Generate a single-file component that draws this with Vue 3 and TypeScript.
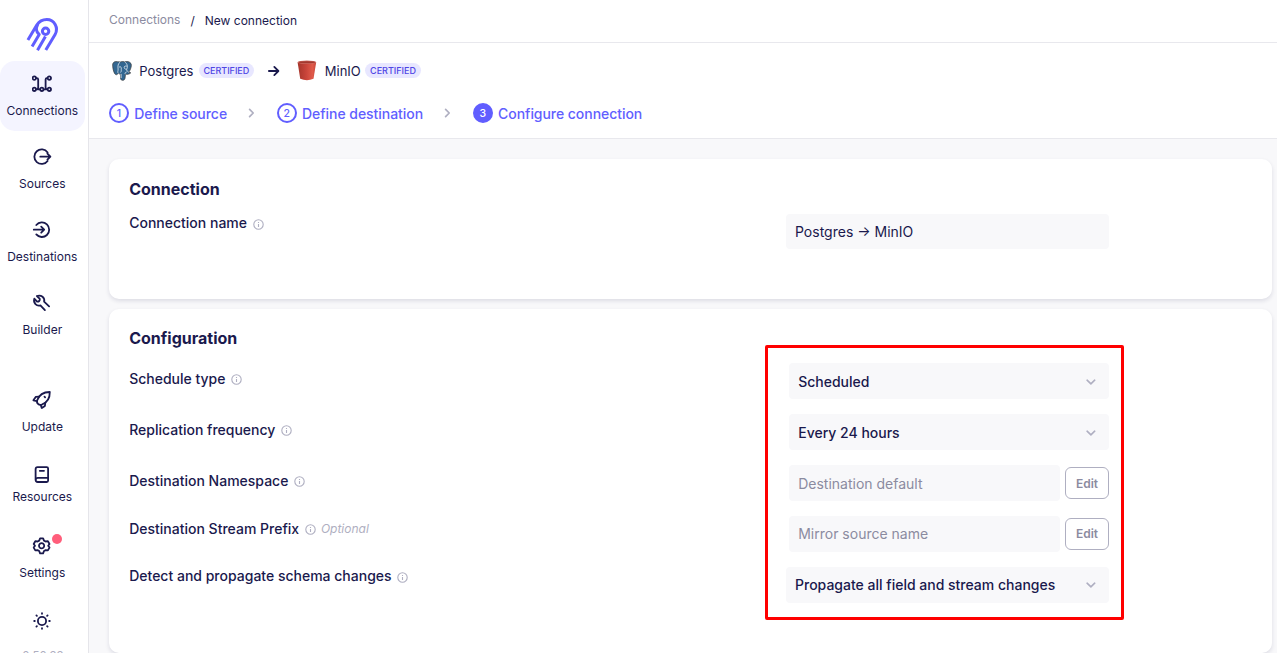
<script setup lang="ts">
interface NavItem {
  label: string
  icon: string
  cls: string
  paths: string[]
}

const navItems: NavItem[] = [
  {
    label: 'Connections',
    icon: 'connections',
    cls: 'active',
    paths: [
      'M4.1 4.1H4.8Q6.2 4.1 6.2 5.5V13.4Q6.2 15.3 4.3 15.3',
      'M15.1 4.1H15Q13.6 4.1 13.6 5.5V13.4Q13.6 15.3 15.2 15.3',
      'M6.2 15.3H7.6M11.9 15.3H13.6',
      'M0.6 4.1a1.7 1.7 0 1 0 3.4 0a1.7 1.7 0 1 0-3.4 0M15.6 4.1a1.7 1.7 0 1 0 3.4 0a1.7 1.7 0 1 0-3.4 0M0.6 15.3a1.7 1.7 0 1 0 3.4 0a1.7 1.7 0 1 0-3.4 0M8.1 15.3a1.7 1.7 0 1 0 3.4 0a1.7 1.7 0 1 0-3.4 0M15.6 15.3a1.7 1.7 0 1 0 3.4 0a1.7 1.7 0 1 0-3.4 0',
    ],
  },
  {
    label: 'Sources',
    icon: 'sources',
    cls: '',
    paths: ['M15.6 5.4A7.3 7.3 0 1 0 15.6 13.9', 'M8.3 9.7H18.2M15.4 6.7L18.4 9.7L15.4 12.7'],
  },
  {
    label: 'Destinations',
    icon: 'destinations',
    cls: '',
    paths: ['M4.3 5A7.3 7.3 0 1 1 4.3 14.4', 'M1.8 9.7H12M9.2 6.7L12.2 9.7L9.2 12.7'],
  },
  {
    label: 'Builder',
    icon: 'builder',
    cls: '',
    paths: [
      'M12.9 17.1L8.4 12.3C4.6 13.4 1 10 2.3 5.7L5.1 8.6C6.8 8.9 8.1 7.6 7.8 5.9L4.9 3C9.2 1.4 13.2 4.8 12.1 8.7L17.1 13.3',
    ],
  },
  {
    label: 'Update',
    icon: 'update',
    cls: 'update',
    paths: [
      'M5.2 10.2C7 5 11.5 2.1 17.8 2C17.9 8 15 12.7 9.8 14.7C6.7 15.7 4.3 13.1 5.2 10.2Z',
      'M7.2 6.6L3.7 6.9L1.4 10.3L4.9 11.1M13.3 12.7L12.9 15.9L9.8 18.1L8.8 15.1',
      'M12.5 6.7L13.1 7.3',
    ],
  },
  {
    label: 'Resources',
    icon: 'resources',
    cls: 'resources',
    paths: [
      'M5.5 2.2H14.7Q16.1 2.2 16.1 3.6V15.5Q16.1 17 14.7 17H5.8Q3.6 17 3.6 14.8V4.2Q3.6 2.2 5.5 2.2Z',
      'M3.8 14.2Q4 12.8 5.8 12.8H16M7.8 5.8H12',
    ],
  },
  {
    label: 'Settings',
    icon: 'settings',
    cls: 'settings',
    paths: [
      'M8.1 2.3H11.1L12 4.6L13.7 5.5L15.9 5.2L17.5 8L16.2 9.7L17.5 11.6L15.9 14.4L13.7 14.1L12 15L11.1 17.3H8.1L7.2 15L5.5 14.1L3.3 14.4L1.7 11.6L3 9.7L1.7 8L3.3 5.2L5.5 5.5L7.2 4.6Z',
      'M7 9.8a2.6 2.6 0 1 0 5.2 0a2.6 2.6 0 1 0-5.2 0',
    ],
  },
]

interface ConfigRow {
  label: string
  cls: string
  value: string
  kind: 'select' | 'edit'
  optional?: boolean
}

const rows: ConfigRow[] = [
  { label: 'Schedule type', cls: '', value: 'Scheduled', kind: 'select' },
  { label: 'Replication frequency', cls: '', value: 'Every 24 hours', kind: 'select' },
  { label: 'Destination Namespace', cls: '', value: 'Destination default', kind: 'edit' },
  { label: 'Destination Stream Prefix', cls: 'prefix', value: 'Mirror source name', kind: 'edit', optional: true },
  { label: 'Detect and propagate schema changes', cls: 'wide', value: 'Propagate all field and stream changes', kind: 'select' },
]
</script>

<template>
  <div class="app">
    <aside class="sidebar">
      <div class="brand">
        <svg width="34" height="36" viewBox="0 0 34 36" class="brand-mark">
          <path d="M19.8 33L29.1 17.4C32.9 10.8 28.3 2.5 20.8 2.5C16.2 2.5 13 4.6 10.8 8.1L1.9 23" />
          <path d="M11.6 7.7C9.6 11.7 10.2 15.1 13.2 17.5L6.1 29.4M11.5 33.2L19.4 19.6" />
          <circle cx="19.6" cy="14.3" r="3.2" />
        </svg>
      </div>
      <nav>
        <a v-for="item in navItems" :key="item.label" class="nav-item" :class="item.cls">
          <span class="nav-icon">
            <svg width="20" height="20" viewBox="0 0 20 20">
              <path v-for="(d, i) in item.paths" :key="i" :d="d" />
            </svg>
            <i v-if="item.icon === 'settings'" class="dot"></i>
          </span>
          <span class="nav-label">{{ item.label }}</span>
        </a>
      </nav>
      <div class="theme">
        <svg width="20" height="20" viewBox="0 0 20 20">
          <circle cx="10" cy="10" r="4.1" />
          <path d="M10 2.2V2.8M10 17.2V17.8M2.2 10H2.8M17.2 10H17.8M4.4 4.4L4.9 4.9M15.1 15.1L15.6 15.6M4.4 15.6L4.9 15.1M15.1 4.9L15.6 4.4" />
        </svg>
      </div>
      <div class="version">0.50.33</div>
    </aside>

    <main>
      <header class="crumbs">
        <span class="crumb-link">Connections</span>
        <span class="slash">/</span>
        <span>New connection</span>
      </header>

      <section class="flow">
        <div class="pair">
          <svg class="pg" width="20" height="20" viewBox="0 0 20 20">
            <path class="pg-body" d="M5.3.7C1.8.2.2 2 .7 5.4C1 8.6 2 12.6 3.7 13.6C4.8 14.2 5.4 13 6.4 12.3C7 13.2 8.2 13.1 8.5 13.2V17.5C8.9 20 12.5 19.9 13 17.4L13.5 13.2C15.2 13.6 17.3 13.3 18.8 11.8L16.8 11.3C18.7 8.5 20 4.6 19 2.6C17.4.2 14.4.2 12.7.9C11.1.3 9.4.5 8.2 1C7.4.8 6.2.7 5.3.7Z" />
            <path class="pg-line" d="M8.2 1.1C5.8 2.5 5.8 5.3 6.1 8C6.3 10 5.1 11 6.4 12.3M7 6.3C8 5.3 9.4 5.8 9.3 7.2C9.1 9 9.7 9.9 8.6 11.5M12.7.9C15.4 2.8 16 5.5 14.7 8.3C14.2 9.8 15.7 10.2 16.8 11.3M14.6 8.1C12.8 8.6 11.6 6.8 12.5 5.5C13.1 4.9 14.3 5 15.1 5.2M9.1 17V12.9M13.3 13.2C12.6 12.1 13.4 11.3 14.7 10.9" />
          </svg>
          <span class="name pg-name">Postgres</span>
          <span class="badge pg-badge">CERTIFIED</span>
          <svg class="arrow" width="12" height="12" viewBox="0 0 12 12"><path d="M.9 6H10.2M6.3 1.9L10.4 6L6.3 10.1" /></svg>
          <svg class="bucket" width="20" height="21" viewBox="0 0 20 21">
            <defs>
              <linearGradient id="pail" x1="0" x2="1" y1="0" y2="0">
                <stop offset="0" stop-color="#a5352b" />
                <stop offset="0.45" stop-color="#c8443a" />
                <stop offset="0.8" stop-color="#e05a49" />
                <stop offset="1" stop-color="#c8473b" />
              </linearGradient>
            </defs>
            <path fill="url(#pail)" d="M.6 2.2L3.2 18.8Q10 21.6 16.5 18.8L19.2 2.2Z" />
            <ellipse cx="9.9" cy="2.2" rx="9.3" ry="1.7" fill="#cf6a60" />
            <ellipse cx="9.9" cy="2.3" rx="8.2" ry="1" fill="#a2382f" />
          </svg>
          <span class="name">MinIO</span>
          <span class="badge">CERTIFIED</span>
        </div>
        <div class="steps">
          <span class="num">1</span><span class="step">Define source</span>
          <svg class="chev" width="8" height="10" viewBox="0 0 8 10"><path d="M1.6 1.4L5.2 5L1.6 8.6" /></svg>
          <span class="num">2</span><span class="step">Define destination</span>
          <svg class="chev" width="8" height="10" viewBox="0 0 8 10"><path d="M1.6 1.4L5.2 5L1.6 8.6" /></svg>
          <span class="num current">3</span><span class="step">Configure connection</span>
        </div>
      </section>

      <div class="content">
        <section class="card first">
          <h2>Connection</h2>
          <div class="row name-row">
            <div class="label">
              Connection name
              <svg class="info" width="11" height="11" viewBox="0 0 11 11"><circle cx="5.5" cy="5.5" r="4.7" /><path d="M5.5 4.9V8M5.5 3.1V3.9" /></svg>
            </div>
            <div class="control"><div class="field text">Postgres → MinIO</div></div>
          </div>
        </section>

        <section class="card second">
          <h2>Configuration</h2>
          <div class="rows">
            <div v-for="row in rows" :key="row.label" class="row" :class="row.cls">
              <div class="label">
                {{ row.label }}
                <svg class="info" width="11" height="11" viewBox="0 0 11 11"><circle cx="5.5" cy="5.5" r="4.7" /><path d="M5.5 4.9V8M5.5 3.1V3.9" /></svg>
                <em v-if="row.optional">Optional</em>
              </div>
              <div class="control">
                <div class="field" :class="row.kind">
                  <span>{{ row.value }}</span>
                  <svg v-if="row.kind === 'select'" width="10" height="8" viewBox="0 0 10 8"><path d="M1.1 2.2L4.9 5.8L8.7 2.2" /></svg>
                </div>
                <button v-if="row.kind === 'edit'">Edit</button>
              </div>
            </div>
          </div>
          <div class="highlight"></div>
        </section>
      </div>
    </main>
  </div>
</template>

<style>
body {
  overflow: hidden;
}
</style>

<style scoped>
.app {
  display: flex;
  width: 1277px;
  height: 653px;
  overflow: hidden;
  background: #f8f8fa;
  color: #1a194d;
  font-family: Inter, sans-serif;
  font-size: 14px;
}
.app * {
  box-sizing: border-box;
}
svg {
  display: block;
  flex: none;
  fill: none;
}
.sidebar {
  width: 89px;
  height: 653px;
  flex: none;
  padding-right: 3px;
  background: #fff;
  border-right: 1px solid #e5e5ea;
  overflow: hidden;
}
.brand {
  height: 61px;
  padding: 17px 0 0 26px;
}
.brand-mark {
  stroke: #615eff;
  stroke-width: 3;
  stroke-linecap: butt;
  stroke-linejoin: round;
}
.nav-item {
  display: flex;
  flex-direction: column;
  align-items: center;
  width: 85px;
  height: 70px;
  margin-bottom: 3px;
  padding-top: 13px;
  border-radius: 15px;
}
.nav-item.active {
  background: #f4f4ff;
}
.nav-item.update {
  margin-top: 27px;
}
.nav-item.resources {
  height: 68px;
  padding-top: 15px;
}
.nav-item.resources .nav-label {
  margin-top: 2px;
}
.nav-icon {
  position: relative;
  height: 20px;
  margin-right: 1px;
}
.nav-icon svg,
.theme svg {
  stroke: #1a194d;
  stroke-width: 1.8;
  stroke-linecap: round;
  stroke-linejoin: round;
}
.nav-label {
  margin-top: 7px;
  padding-right: 0.4px;
  font-size: 12px;
  letter-spacing: 0.02px;
  line-height: 20px;
}
.dot {
  position: absolute;
  left: 20px;
  top: -2px;
  width: 10px;
  height: 10px;
  border-radius: 50%;
  background: #ff5e7b;
}
.nav-item.settings {
  padding-top: 15px;
}
.nav-item.settings .nav-label {
  margin-top: 7px;
}
.theme {
  display: flex;
  justify-content: center;
  width: 84px;
  margin-top: 20px;
}
.version {
  width: 86px;
  margin-top: 17px;
  text-align: center;
  font-size: 11.5px;
  line-height: 16px;
  color: #afafc1;
}
main {
  flex: 1;
  min-width: 0;
}
.crumbs {
  display: flex;
  height: 43px;
  padding: 10px 0 0 20px;
  background: #fff;
  border-bottom: 1px solid #e8e8ed;
  font-size: 12px;
  line-height: 21px;
}
.crumb-link {
  line-height: 19px;
  color: #8b8ba0;
}
.slash {
  margin: 0 10px;
}
.flow {
  height: 96px;
  padding-top: 17px;
  background: #fff;
  border-bottom: 1px solid #e8e8ed;
}
.pair {
  display: flex;
  align-items: center;
  height: 21px;
  padding-left: 23px;
}
.pg-body {
  fill: #336791;
  stroke: #3b3b3b;
  stroke-width: 0.7;
}
.pg-line {
  stroke: #e6edf4;
  stroke-width: 0.8;
}
.name {
  padding-top: 1px;
  margin-left: 7.3px;
  font-size: 13px;
}
.badge {
  height: 15px;
  margin-left: 4.6px;
  padding: 0 4.7px;
  border-radius: 8px;
  background: #e8e7ff;
  color: #4f46e5;
  font-size: 9px;
  font-weight: 500;
  line-height: 15px;
}
.pg-badge {
  margin-left: 5.3px;
}
.arrow {
  margin: 0 17px 0 14.5px;
  stroke: #1a194d;
  stroke-width: 1.8;
  stroke-linecap: round;
  stroke-linejoin: round;
}
.steps {
  display: flex;
  align-items: center;
  height: 20px;
  margin-top: 22px;
  padding-left: 20px;
}
.num {
  width: 20px;
  height: 20px;
  border: 2px solid #615eff;
  border-radius: 50%;
  color: #615eff;
  font-size: 10.5px;
  font-weight: 500;
  line-height: 17px;
  text-align: center;
}
.num.current {
  background: #615eff;
  color: #fff;
}
.step {
  margin-left: 5.2px;
  padding-top: 1px;
  color: #615eff;
  font-size: 14px;
  font-weight: 500;
  letter-spacing: -0.045px;
}
.chev {
  margin: 0 21px 0 20.8px;
  stroke: #afafc1;
  stroke-width: 1.7;
  stroke-linecap: round;
  stroke-linejoin: round;
}
.content {
  padding: 20px 5px 0 20px;
}
.card {
  position: relative;
  padding: 20px 163px 0 20.2px;
  background: #fff;
  border-radius: 10px;
  box-shadow: 0 2px 4px rgba(26, 25, 77, 0.12);
}
.first {
  height: 140px;
}
.second {
  height: 344px;
  margin-top: 10px;
  padding-top: 19px;
}
h2 {
  margin: 0;
  font-size: 16px;
  font-weight: 700;
  line-height: 20px;
}
.row {
  display: flex;
  justify-content: space-between;
  height: 36px;
}
.name-row {
  margin-top: 15px;
}
.rows {
  display: flex;
  flex-direction: column;
  gap: 15px;
  margin-top: 15px;
}
.label {
  display: flex;
  align-items: center;
  height: 20px;
  margin-top: 5px;
  font-weight: 500;
  white-space: nowrap;
}
.name-row .label,
.wide .label {
  margin-top: -2px;
}
.prefix .label {
  margin-top: 2px;
}
.info {
  margin: 3px 0 0 5.8px;
  stroke: #afafc1;
  stroke-width: 1.1;
}
.name-row .info,
.wide .info {
  margin-top: 5px;
}
em {
  margin-left: 5px;
  color: #afafc1;
  font-size: 12px;
  font-weight: 400;
}
.control {
  display: flex;
  align-items: center;
  gap: 5px;
  width: 320px;
  height: 36px;
}
.name-row .control {
  width: 323px;
  height: 35px;
}
.wide .control {
  width: 323px;
}
.field {
  display: flex;
  flex: 1;
  align-items: center;
  justify-content: space-between;
  height: 100%;
  padding: 1px 13px 0 9.2px;
  border-radius: 4px;
  background: #f8f8fa;
  font-weight: 500;
}
.field.text {
  padding: 0 9px 1px;
  font-weight: 400;
}
.prefix .field span,
.wide .field span {
  padding-bottom: 2px;
}
.wide .field {
  padding-left: 9px;
}
.wide .field svg {
  margin-bottom: 2px;
}
.field.edit {
  color: #8b8ba0;
  font-weight: 400;
}
.field svg {
  stroke: #afafc1;
  stroke-width: 1.6;
  stroke-linecap: round;
  stroke-linejoin: round;
}
button {
  width: 44px;
  height: 32px;
  padding: 0;
  border: 1px solid #afafc1;
  border-radius: 6px;
  background: #fff;
  color: #8b8ba0;
  font: 600 12px Inter, sans-serif;
}
.prefix button {
  padding-bottom: 1px;
}
.highlight {
  position: absolute;
  left: 656px;
  top: 36px;
  width: 359px;
  height: 275px;
  border: 3px solid #f00;
  border-radius: 2px;
}
</style>
